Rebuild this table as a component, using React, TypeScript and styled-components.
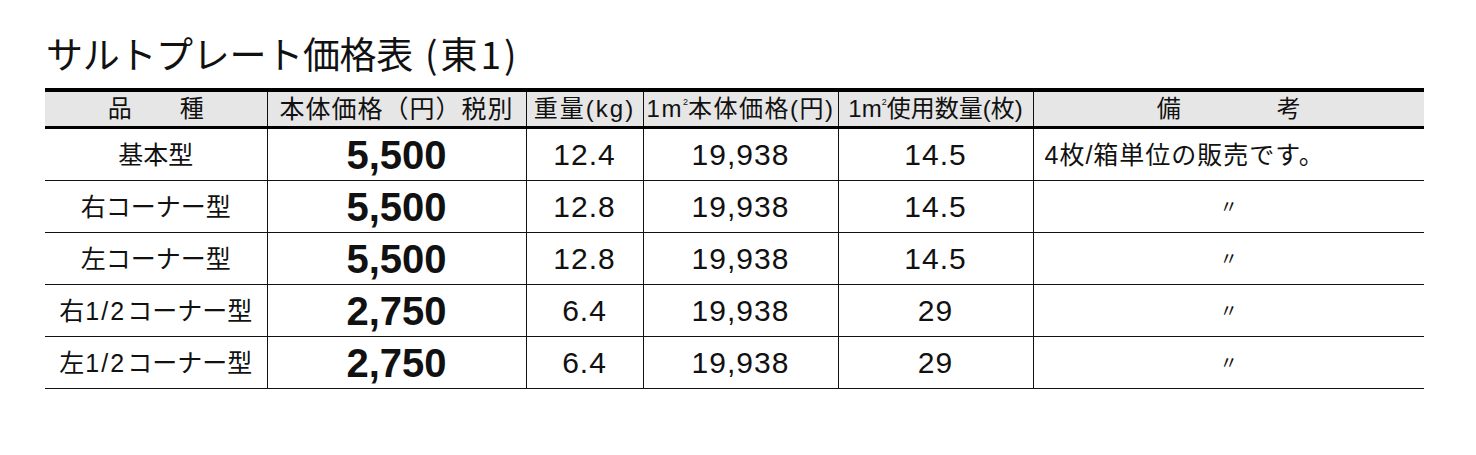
import React from 'react';
import styled, { createGlobalStyle } from 'styled-components';

const GlobalStyle = createGlobalStyle`
  html, body {
    margin: 0;
    padding: 0;
    background: #fff;
  }
  body {
    font-family: "Liberation Sans", "Noto Sans CJK JP", sans-serif;
    color: #111;
  }
`;

const Page = styled.div`
  padding: 26px 0 0 45px;
  width: 1379px;
`;

const Title = styled.h1`
  margin: 0 0 7px 1px;
  font-size: 37px;
  font-weight: 400;
  line-height: 55px;
  letter-spacing: -0.3px;
  font-family: "Noto Sans CJK JP", sans-serif;
`;

const Paren = styled.span`
  margin-left: 12px;
  letter-spacing: 3px;
`;

const Table = styled.table`
  width: 1379px;
  border-collapse: collapse;
  table-layout: fixed;
  border-top: 4px solid #000;
`;

const HeadRow = styled.tr`
  background: #e6e6e6;
  border-bottom: 3px solid #000;
`;

const Th = styled.th<{ $spacing?: number; $size?: number }>`
  height: 34px;
  padding: 0;
  font-size: ${(p) => p.$size ?? 24}px;
  font-weight: 400;
  line-height: 34px;
  letter-spacing: ${(p) => p.$spacing ?? 0}px;
  text-align: center;
  white-space: nowrap;
  overflow: hidden;
  border-left: 1.5px solid #111;
  &:first-child { border-left: none; }
  sup {
    font-size: 9px;
    vertical-align: 12px;
    line-height: 0;
    letter-spacing: 0;
  }
`;

const Row = styled.tr`
  border-bottom: 1.5px solid #111;
`;

type CellProps = { $kind: 'name' | 'price' | 'num' | 'note' | 'ditto' };

const Td = styled.td<CellProps>`
  height: 51px;
  padding: ${(p) => (p.$kind === 'note' ? '0 0 0 11px' : '0')};
  text-align: ${(p) => (p.$kind === 'note' ? 'left' : 'center')};
  white-space: nowrap;
  border-left: 1.5px solid #111;
  &:first-child { border-left: none; }
  font-size: ${(p) =>
    p.$kind === 'price' ? '40px' : p.$kind === 'num' ? '30px' : p.$kind === 'ditto' ? '18px' : '25px'};
  font-weight: ${(p) => (p.$kind === 'price' ? 700 : 400)};
  letter-spacing: ${(p) => (p.$kind === 'num' || p.$kind === 'note' ? '1px' : '0')};
  line-height: 50px;
`;

const Frac = styled.span`
  margin: 0 1px;
  letter-spacing: 2px;
`;

const rows = [
  { name: '基本型', price: '5,500', kg: '12.4', m2: '19,938', qty: '14.5', note: '4枚/箱単位の販売です。' },
  { name: '右コーナー型', price: '5,500', kg: '12.8', m2: '19,938', qty: '14.5', note: '' },
  { name: '左コーナー型', price: '5,500', kg: '12.8', m2: '19,938', qty: '14.5', note: '' },
  { name: '右|コーナー型', price: '2,750', kg: '6.4', m2: '19,938', qty: '29', note: '' },
  { name: '左|コーナー型', price: '2,750', kg: '6.4', m2: '19,938', qty: '29', note: '' },
];

function Name({ text }: { text: string }) {
  const [head, tail] = text.split('|');
  if (tail === undefined) return <>{text}</>;
  return (
    <>
      {head}
      <Frac>1/2</Frac>
      {tail}
    </>
  );
}

export default function App() {
  return (
    <>
      <GlobalStyle />
      <Page>
        <Title>
          サルトプレート価格表<Paren>(東1)</Paren>
        </Title>
        <Table>
          <colgroup>
            <col style={{ width: 222 }} />
            <col style={{ width: 259 }} />
            <col style={{ width: 117 }} />
            <col style={{ width: 195 }} />
            <col style={{ width: 195 }} />
            <col style={{ width: 391 }} />
          </colgroup>
          <thead>
            <HeadRow>
              <Th>品　　種</Th>
              <Th $spacing={1} $size={25}>本体価格（円）税別</Th>
              <Th $spacing={2}>重量(kg)</Th>
              <Th $spacing={1.5}>1m<sup>2</sup>本体価格(円)</Th>
              <Th>1m<sup>2</sup>使用数量(枚)</Th>
              <Th>備　　　　考</Th>
            </HeadRow>
          </thead>
          <tbody>
            {rows.map((r, i) => (
              <Row key={i}>
                <Td $kind="name">
                  <Name text={r.name} />
                </Td>
                <Td $kind="price">{r.price}</Td>
                <Td $kind="num">{r.kg}</Td>
                <Td $kind="num">{r.m2}</Td>
                <Td $kind="num">{r.qty}</Td>
                {r.note ? (
                  <Td $kind="note">{r.note}</Td>
                ) : (
                  <Td $kind="ditto">〃</Td>
                )}
              </Row>
            ))}
          </tbody>
        </Table>
      </Page>
    </>
  );
}
